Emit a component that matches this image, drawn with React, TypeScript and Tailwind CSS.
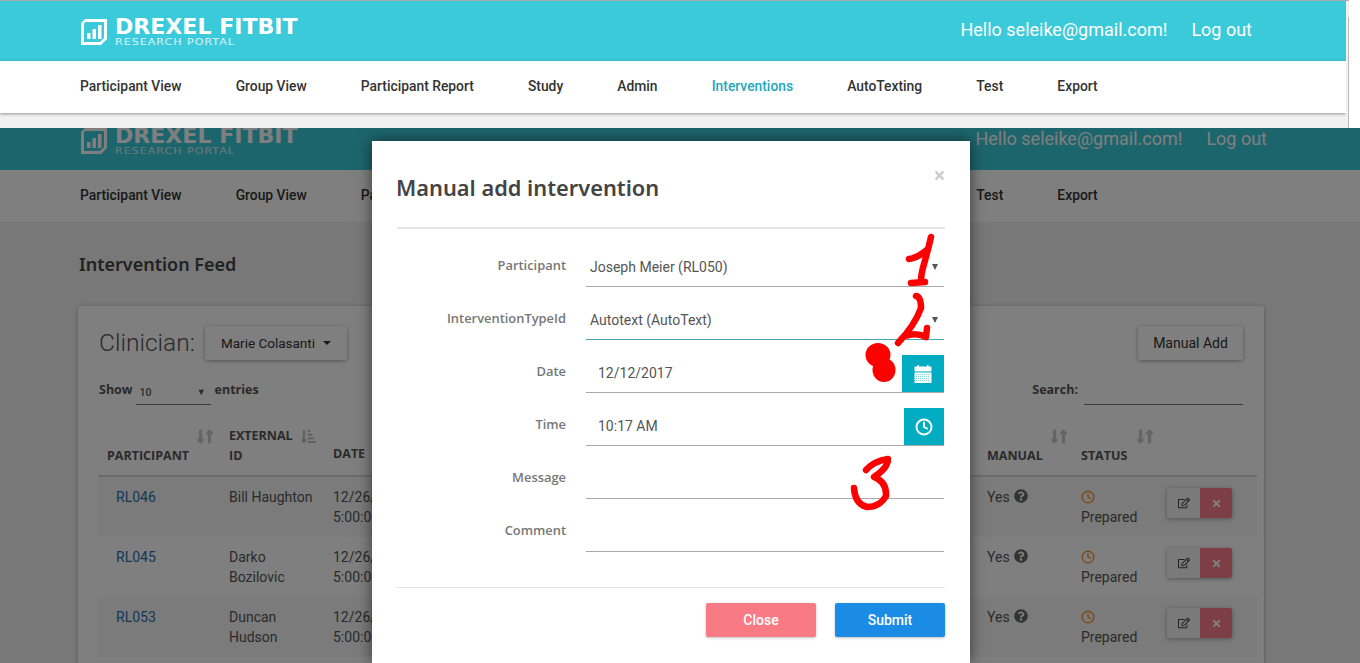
import React from "react";
import { Clock } from "lucide-react";
import { FaRegEdit, FaTimes, FaQuestionCircle, FaLongArrowAltDown, FaLongArrowAltUp, FaSortAmountDownAlt } from "react-icons/fa";

const navItems = ["Participant View", "Group View", "Participant Report", "Study", "Admin", "Interventions", "AutoTexting", "Test", "Export"];

function Logo() {
  return (
    <div className="flex items-start gap-[8px]">
      <svg width="26" height="26" viewBox="0 0 26 26" className="shrink-0">
        <path d="M4 0H26V20L20 26H0V4Z" fill="#fff" />
        <path d="M5 3H22a1 1 0 0 1 1 1V19L19 23H3V5a2 2 0 0 1 2-2Z" fill="#3bcad9" />
        <rect x="6" y="14" width="3.5" height="6" fill="#fff" />
        <rect x="11.5" y="10" width="3.5" height="10" fill="#fff" />
        <rect x="17" y="6" width="3.5" height="14" fill="#fff" />
      </svg>
      <div className="flex flex-col">
        <span className="h-[17px] text-[21px] leading-[17px] font-bold text-white whitespace-nowrap font-['DejaVu_Sans',sans-serif] scale-x-[1.05] origin-left">DREXEL FITBIT</span>
        <span className="mt-[2px] h-[8px] text-[9.5px] leading-[8px] text-white/80 whitespace-nowrap tracking-[0.85px] font-['DejaVu_Sans',sans-serif] scale-x-[1.167] origin-left">RESEARCH PORTAL</span>
      </div>
    </div>
  );
}

function Header({ right }: { right: string }) {
  return (
    <div className={`h-[60px] bg-[#3bcad9] flex items-start pl-[81px] pt-[18px] ${right}`}>
      <Logo />
      <div className="ml-auto -mt-[1px] flex gap-[24px] text-[18px] leading-[24px] text-white font-['Roboto',sans-serif]">
        <span>Hello seleike@gmail.com!</span>
        <span>Log out</span>
      </div>
    </div>
  );
}

function Nav() {
  return (
    <div className="h-[52px] pb-[2px] bg-white flex items-center pl-[80px] gap-[54.12px] text-[13.85px] font-medium text-[#333] font-['Roboto',sans-serif] whitespace-nowrap">
      {navItems.map((n) => (
        <span key={n} className={n === "Interventions" ? "text-[#1fa8bd]" : ""}>{n}</span>
      ))}
    </div>
  );
}

function Sort({ amount }: { amount?: boolean }) {
  return (
    <span className="flex text-[#c8c8c8] items-center h-[20px]">
      {amount ? <FaSortAmountDownAlt size={15} className="text-[#bbb]" /> : (<><FaLongArrowAltDown size={15} stroke="currentColor" strokeWidth={30} className="-mr-[6px]" /><FaLongArrowAltUp size={15} stroke="currentColor" strokeWidth={30} /></>)}
    </span>
  );
}

const rows = [
  { id: "RL046", name: ["Bill Haughton"], striped: true },
  { id: "RL045", name: ["Darko", "Bozilovic"], striped: false },
  { id: "RL053", name: ["Duncan", "Hudson"], striped: true },
];

const cols = "grid grid-cols-[131px_104px_654px_94px_86px_90px]";

function Card() {
  return (
    <div className="ml-[78px] w-[1186px] bg-white rounded-[3px] shadow-[0_1px_4px_rgba(0,0,0,0.3)] px-[20px] pt-[20px] h-[400px] font-['Roboto',sans-serif] text-[#555]">
      <div className="flex items-center h-[34px]">
        <span className="text-[24.5px] font-light text-[#555] w-[106px] ml-[1px] pt-[1px]">Clinician:</span>
        <button className="w-[142px] h-[34px] rounded-[3px] bg-white shadow-[0_1px_4px_rgba(0,0,0,0.35)] text-[13.5px] text-[#333] flex items-center justify-center gap-[8px]">
          Marie Colasanti
          <span className="w-0 h-0 border-x-[4px] border-x-transparent border-t-[4px] border-t-[#333]" />
        </button>
        <button className="ml-auto mr-[1px] w-[105px] h-[34px] rounded-[3px] bg-white shadow-[0_1px_4px_rgba(0,0,0,0.35)] text-[14px] text-[#333]">Manual Add</button>
      </div>
      <div className="flex items-end h-[45px] text-[12.5px] font-bold font-['Open_Sans',sans-serif] text-[#555]">
        <span className="pb-[5px] ml-[1px]">Show</span>
        <span className="ml-[3px] w-[75px] h-[24px] border-b border-[#777] flex items-center justify-between pl-[4px] pr-[5px] font-['Roboto',sans-serif] text-[10.5px] font-medium">
          10<span className="text-[9px]">▼</span>
        </span>
        <span className="ml-[4px] pb-[5px]">entries</span>
        <span className="ml-auto pb-[5px] mr-[6px]">Search:</span>
        <span className="w-[159px] h-[24px] border-b border-[#777] mr-[1px]" />
      </div>
      <div className={`${cols} mt-[15px] h-[57px] w-[1159px] border-b-2 border-[#d8d8d8] text-[12.5px] font-bold font-['Open_Sans',sans-serif] text-[#555] leading-[20px]`}>
        <div className="flex flex-col pl-[9px] pt-[6px]"><span className="self-end pr-[12px]"><Sort /></span><span>PARTICIPANT</span></div>
        <div className="flex flex-col pt-[6px]"><span className="flex items-center gap-[8px]">EXTERNAL <Sort amount /></span><span>ID</span></div>
        <div className="flex flex-col justify-end pb-[11px]"><span>DATE</span></div>
        <div className="flex flex-col pt-[6px]"><span className="self-end pr-[10px]"><Sort /></span><span>MANUAL</span></div>
        <div className="flex flex-col pt-[6px]"><span className="self-end pr-[10px]"><Sort /></span><span>STATUS</span></div>
        <div />
      </div>
      <div className="w-[1159px] text-[14px] leading-[20px] text-[#555]">
        {rows.map((r) => (
          <div key={r.id} className={`${cols} h-[60px] pt-[10px] ${r.striped ? "bg-[#f6f6f6]" : "bg-white"}`}>
            <a className="pl-[18px] text-[#2a6fb0]">{r.id}</a>
            <div className="flex flex-col">{r.name.map((n) => <span key={n}>{n}</span>)}</div>
            <div className="flex flex-col"><span>12/26/2017</span><span>5:00:00 PM</span></div>
            <div className="flex items-start gap-[4px]"><span>Yes</span><FaQuestionCircle size={14} className="mt-[2px] text-[#666]" /></div>
            <div className="flex flex-col items-start"><Clock size={14} strokeWidth={2.2} className="mt-[3px] mb-[3px] text-[#f68b1f]" /><span>Prepared</span></div>
            <div className="flex mt-[1px] h-[30px] w-[65px] rounded-[2px] overflow-hidden shadow-[0_1px_4px_rgba(0,0,0,0.35)]">
              <span className="w-[33px] bg-[#f5f5f5] flex items-center justify-center text-[#444]"><FaRegEdit size={12} /></span>
              <span className="w-[32px] bg-[#fb7d8c] flex items-center justify-center text-white"><FaTimes size={11} /></span>
            </div>
          </div>
        ))}
      </div>
    </div>
  );
}

function Field({ label, children, teal, pad }: { label: string; children?: React.ReactNode; teal?: boolean; pad?: boolean }) {
  return (
    <div className="flex h-[53px]">
      <label className="w-[169px] text-right pt-[21px] text-[12.9px] leading-[20px] font-semibold text-[#777] font-['Open_Sans',sans-serif]">{label}</label>
      <div className={`ml-[20px] w-[358px] h-[53px] pt-[14px] border-b flex items-center text-[14px] text-[#555] font-['Roboto',sans-serif] ${teal ? "border-[#45a6b0]" : "border-[#aaa]"} ${pad ? "pl-[12px]" : "pl-[4px]"}`}>
        {children}
      </div>
    </div>
  );
}

function Caret() {
  return <span className="ml-auto mr-[6px] w-0 h-0 border-x-[3px] border-x-transparent border-t-[6px] border-t-[#555]" />;
}

function CalendarIcon() {
  const dots: React.ReactNode[] = [];
  for (let y = 9; y < 17; y += 2) {
    for (let x = 2; x < 16; x += 2) {
      dots.push(<rect key={`${x}-${y}`} x={x} y={y} width="1" height="1" fill="#7fd5e0" />);
    }
  }
  return (
    <svg width="18" height="18" viewBox="0 0 18 18">
      <rect x="0.5" y="1.5" width="17" height="5" rx="1" fill="#fff" />
      <rect x="3.5" y="0" width="1.5" height="2" fill="#fff" />
      <rect x="13" y="0" width="1.5" height="2" fill="#fff" />
      <rect x="0.5" y="7.5" width="17" height="10.5" fill="#fff" />
      {dots}
    </svg>
  );
}

function Modal() {
  return (
    <div className="absolute left-[372px] top-[13px] w-[598px] h-[522px] bg-white shadow-[0_0_14px_rgba(0,0,0,0.55)] px-[25px]">
      <div className="relative h-[88px] border-b-2 border-[#e5e5e5]">
        <h4 className="pt-[32px] -ml-[1px] text-[21.8px] leading-[30px] font-semibold text-[#444] font-['Noto_Sans',sans-serif]">Manual add intervention</h4>
        <span className="absolute -right-[1px] top-[28px] text-[#ccc]"><FaTimes size={13} /></span>
      </div>
      <div className="h-[5px]" />
      <Field label="Participant"><span>Joseph Meier (RL050)</span><Caret /></Field>
      <Field label="InterventionTypeId" teal><span>Autotext (AutoText)</span><Caret /></Field>
      <Field label="Date" pad>
        <span>12/12/2017</span>
        <span className="ml-auto w-[42px] h-[37px] self-end bg-[#00acc1] flex items-center justify-center"><CalendarIcon /></span>
      </Field>
      <Field label="Time" pad>
        <span>10:17 AM</span>
        <span className="ml-auto w-[40px] h-[37px] self-end bg-[#00acc1] flex items-center justify-center text-white"><Clock size={18} strokeWidth={2.6} /></span>
      </Field>
      <Field label="Message" />
      <Field label="Comment" />
      <div className="mt-[35px] border-t border-[#e5e5e5] pt-[15px] flex justify-end gap-[19px] text-[14px] font-medium text-white font-['Roboto',sans-serif]">
        <button className="w-[110px] h-[34px] rounded-[2px] bg-[#f77a85] shadow-[0_1px_3px_rgba(0,0,0,0.25)]">Close</button>
        <button className="w-[110px] h-[34px] rounded-[2px] bg-[#1a8ce6] shadow-[0_1px_3px_rgba(0,0,0,0.25)]">Submit</button>
      </div>
    </div>
  );
}

function Scribbles() {
  const p = { fill: "none", stroke: "#f00", strokeWidth: 6.5, strokeLinecap: "round" as const, strokeLinejoin: "round" as const };
  return (
    <svg className="absolute left-0 top-0 pointer-events-none" width="1360" height="663">
      <path {...p} d="M931 237 Q928 250 924 264 Q921 274 921 281 M909 259 Q918 258 928 249 M911 283 L925 282" />
      <path {...p} d="M916 296 Q921 297 921 308 Q915 325 898 343 M905 336 Q916 332 926 337 L927 328" />
      <ellipse cx="878" cy="355" rx="12.5" ry="12" fill="#f00" />
      <ellipse cx="884" cy="370" rx="11.5" ry="12" fill="#f00" />
      <path {...p} d="M866 470 Q874 461 888 459 Q888 468 874 477 Q887 482 886 496 Q880 507 867 507 Q855 504 854 488" />
    </svg>
  );
}

export default function App() {
  return (
    <div className="relative w-[1360px] h-[663px] overflow-hidden bg-white">
      <div className="h-[128px] flex">
        <div className="w-[1346px] bg-[#f1f1f1] shrink-0">
          <div className="h-px bg-[#aaa]" />
          <Header right="pr-[94px]" />
          <div className="shadow-[0_1px_3px_rgba(0,0,0,0.4)]"><Nav /></div>
        </div>
        <div className="w-[3px] bg-[#f1f1f1] shrink-0 flex flex-col">
          <div className="h-px bg-[#aaa]" />
          <div className="mt-[16px] flex-1 border-r border-[#bbb]" />
        </div>
      </div>
      <div className="relative h-[535px] overflow-hidden bg-[#f1f1f1]">
        <div className="-mt-[18px]">
          <Header right="pr-[93px]" />
          <Nav />
          <div className="h-[84px] pl-[79px] pt-[30px] text-[18px] leading-[24px] font-semibold text-[#444] font-['Noto_Sans',sans-serif]">Intervention Feed</div>
          <Card />
        </div>
        <div className="absolute inset-0 bg-[#000] opacity-50" />
        <Modal />
      </div>
      <Scribbles />
    </div>
  );
}
